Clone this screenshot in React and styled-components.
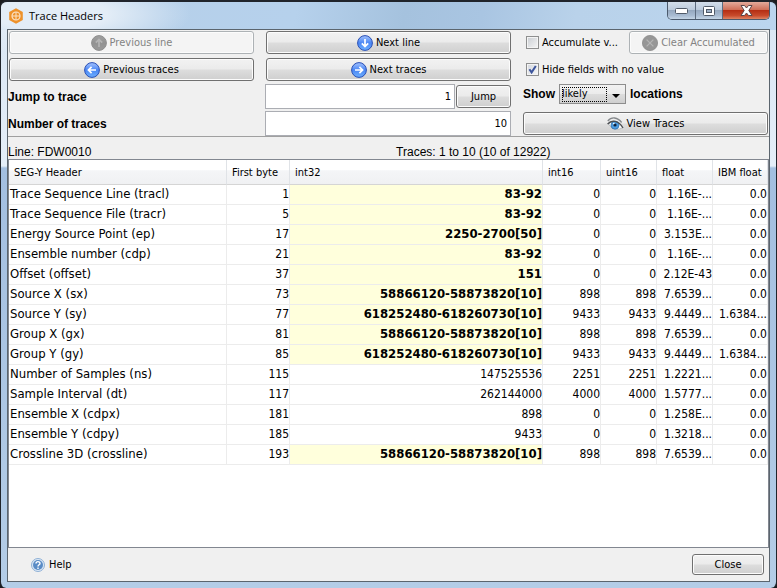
import React, { useState } from 'react';
import styled, { createGlobalStyle, css } from 'styled-components';

const GlobalStyle = createGlobalStyle`
  * { box-sizing: border-box; }
  html, body { margin: 0; background: #1b1c1f; }
  body { font: 11px/14px "DejaVu Sans Condensed", "DejaVu Sans", sans-serif; color: #000; }
  button, input, select { font: inherit; color: inherit; margin: 0; }
`;

const uiFont = css`
  font-family: "DejaVu Sans Condensed", "DejaVu Sans", sans-serif;
  font-size: 11px;
  line-height: 14px;
`;

const WindowFrame = styled.div`
  display: flex;
  flex-direction: column;
  min-height: 100vh;
  padding: 0 6px 6px;
  border: 1px solid #20242b;
  border-width: 2px 1px 0 1px;
  border-radius: 7px 7px 6px 6px;
  background:
    radial-gradient(ellipse 140px 40px at 50px 12px, #e3edf7 40%, rgba(227, 237, 247, 0) 100%),
    linear-gradient(100deg, #b6cfe8 0, #b6d1ec 38%, #a5c2de 52%, #a9c5e2 62%, #b9d2ea 74%, #bbd5ee 100%) 0 0 / 100% 28px no-repeat,
    linear-gradient(#d9e6f4 0, #e4eef8 164px, #a3bfe0 166px, #b4cde7 100%);
`;

const TitleBar = styled.header`
  display: flex;
  align-items: center;
  height: 27px;
  padding: 0 0 0 2px;
`;

const Title = styled.h1`
  flex: 1;
  margin: 0 0 0 6px;
  font: 11px/16px "Open Sans", sans-serif;
`;

const Caption = styled.div`
  display: flex;
  align-self: flex-start;
  height: 18px;
  border: 1px solid #4b5a6c;
  border-top: 0;
  border-radius: 0 0 5px 5px;
  overflow: hidden;
`;

const CaptionButton = styled.button`
  display: grid;
  place-items: center;
  width: ${(p) => (p.$danger ? 47 : 27)}px;
  padding: 0;
  border: 0;
  border-left: ${(p) => (p.$first ? '0' : '1px solid #5c6b7e')};
  background: ${(p) =>
    p.$danger
      ? 'linear-gradient(#e3aa9b 0, #cf7059 45%, #b52f14 50%, #c84b2c 80%, #de8463 100%)'
      : 'linear-gradient(#d3deea 0, #bccbdc 45%, #96a9c0 50%, #a9bcd2 80%, #c4d5e6 100%)'};
`;

const Client = styled.main`
  flex: 1;
  display: flex;
  flex-direction: column;
  border: 1px solid #5b656e;
  background: #f0f0f0;
`;

const Controls = styled.section`
  display: grid;
  grid-template-columns: repeat(3, minmax(0, 1fr));
  grid-auto-rows: 25px;
  gap: 2px 11px;
  align-items: center;
  padding-right: 1px;
  border-bottom: 1px solid #a0a0a0;
`;

const PushButton = styled.button`
  ${uiFont}
  display: flex;
  align-items: center;
  justify-content: center;
  gap: 3px;
  width: ${(p) => p.$width || 'calc(100% - 1px)'};
  height: ${(p) => p.$height || 23}px;
  flex: none;
  margin-left: 1px;
  padding: 0 6px;
  border: 1px solid #707070;
  border-radius: 3px;
  box-shadow: inset 0 0 0 1px #fcfcfc;
  background: linear-gradient(#f2f2f2 0, #ebebeb 48%, #dddddd 52%, #cfcfcf 100%);
  white-space: nowrap;
  &:disabled {
    color: #838383;
    border-color: #adb2b5;
    background: #f4f4f4;
  }
`;

const FieldLabel = styled.label`
  font: bold 12px/16px "Liberation Sans", sans-serif;
`;

const JumpGroup = styled.div`
  display: flex;
  align-items: center;
`;

const NumberInput = styled.input`
  ${uiFont}
  flex: 1;
  min-width: 0;
  width: 100%;
  height: 25px;
  padding: 0 3px;
  border: 1px solid #abadb3;
  background: #fff;
  text-align: right;
`;

const OptionRow = styled.div`
  display: flex;
  align-items: center;
  justify-content: space-between;
  gap: 4px;
`;

const CheckLabel = styled.label`
  ${uiFont}
  display: flex;
  align-items: center;
  gap: 3px;
  padding-left: 4px;
  white-space: nowrap;
`;

const CheckBox = styled.input`
  appearance: none;
  width: 13px;
  height: 13px;
  border: 1px solid #8e8f8f;
  box-shadow: inset 0 0 0 1px #f4f4f4;
  background: linear-gradient(135deg, #c9cdd2, #f6f6f6);
  &:checked {
    background:
      url("data:image/svg+xml,%3Csvg xmlns='http://www.w3.org/2000/svg' viewBox='0 0 11 11'%3E%3Cpath d='M2.4 5.2 4.6 8.4 8.8 2' fill='none' stroke='%233d559c' stroke-width='2'/%3E%3C/svg%3E") center / 11px 11px no-repeat,
      linear-gradient(135deg, #d4d8df, #f6f6f6);
  }
`;

const LocationRow = styled.div`
  display: flex;
  align-items: center;
  align-self: start;
  gap: 4px;
  padding-left: 1px;
`;

const LocationSelect = styled.select`
  ${uiFont}
  appearance: none;
  width: 67px;
  height: 20px;
  padding: 0 20px 0 2px;
  border: 1px solid #8d8d8d;
  background:
    url("data:image/svg+xml,%3Csvg xmlns='http://www.w3.org/2000/svg' viewBox='0 0 8 4'%3E%3Cpath d='M0 0h8L4 4z'/%3E%3C/svg%3E") right 5px top 9px / 8px 4px no-repeat,
    url("data:image/svg+xml,%3Csvg xmlns='http://www.w3.org/2000/svg' viewBox='0 0 45 15'%3E%3Cpath d='M0 .5H45M0 14.5H45M.5 0V15M44.5 0V15' fill='none' stroke='%23000' stroke-dasharray='1 1'/%3E%3C/svg%3E") 2px 2px / 45px 15px no-repeat,
    linear-gradient(#f2f2f2 0, #ebebeb 48%, #dddddd 52%, #cfcfcf 100%);
`;

const StatusLine = styled.div`
  display: grid;
  grid-template-columns: 51fr 49fr;
  height: 22px;
  padding-top: 7px;
  font: 12px/16px "Liberation Sans", sans-serif;
`;

const TablePanel = styled.section`
  flex: 1;
  border: 1px solid #828790;
  background: #fff;
`;

const HeaderTable = styled.table`
  width: 100%;
  table-layout: fixed;
  border-collapse: separate;
  border-spacing: 0;
`;

const Col = styled.col`
  width: ${(p) => p.$width};
`;

const HeadCell = styled.th`
  ${uiFont}
  height: 25px;
  padding: 2px 4px 0 5px;
  border-right: 1px solid #e0e3e7;
  border-bottom: 1px solid #d5d5d5;
  background: linear-gradient(#fff 0, #fff 40%, #f4f5f7 45%, #f0f1f3 100%);
  font-weight: 400;
  text-align: left;
  white-space: nowrap;
`;

const Cell = styled.td`
  height: 20px;
  padding: 0 0 0 1px;
  border-right: 1px solid #ececec;
  border-bottom: 1px solid #ececec;
  font-size: ${(p) => (p.$name || p.$marked ? 13 : 12)}px;
  line-height: 18px;
  vertical-align: baseline;
  overflow: hidden;
  text-overflow: clip;
  white-space: nowrap;
  text-align: ${(p) => (p.$name ? 'left' : 'right')};
  ${(p) => p.$marked && css`background: #ffffdc; font-weight: 700;`}
`;

const Footer = styled.footer`
  display: flex;
  align-items: center;
  justify-content: space-between;
  height: 33px;
  padding: 0 5px 0 23px;
`;

const HelpLink = styled.a`
  ${uiFont}
  display: flex;
  align-items: center;
  gap: 4px;
  color: inherit;
  text-decoration: none;
`;

const arrowTurn = { up: 0, right: 90, down: 180, left: 270 };

function ArrowIcon({ dir, muted }) {
  const id = `ball-${dir}`;
  return (
    <svg width="16" height="16" viewBox="0 0 16 16" aria-hidden="true">
      <defs>
        <linearGradient id={id} x1="0" y1="0" x2="0" y2="1">
          <stop offset="0" stopColor={muted ? '#a0a0a0' : '#a4c3ff'} />
          <stop offset="0.5" stopColor={muted ? '#929292' : '#4a86f4'} />
          <stop offset="1" stopColor={muted ? '#9a9a9a' : '#6db0ff'} />
        </linearGradient>
      </defs>
      <circle cx="8" cy="8" r="7.4" fill={`url(#${id})`} stroke={muted ? '#8e8e8e' : '#2a4fb4'} />
      <path d="M8 12V4.6M4.8 7.6 8 4.4l3.2 3.2" transform={`rotate(${arrowTurn[dir]} 8 8)`} fill="none" stroke={muted ? '#b4b4b4' : '#fff'} strokeWidth="1.7" />
    </svg>
  );
}

function ClearIcon() {
  return (
    <svg width="16" height="16" viewBox="0 0 16 16" aria-hidden="true">
      <circle cx="8" cy="8" r="7.6" fill="#969696" stroke="#8c8c8c" strokeWidth=".8" />
      <path d="m4.6 4.6 6.8 6.8m0-6.8-6.8 6.8" stroke="#b4b4b4" strokeWidth="1.3" />
    </svg>
  );
}

function EyeIcon() {
  return (
    <svg width="17" height="16" viewBox="0 0 17 16" aria-hidden="true">
      <path d="M1.5 8C5 4.3 11 4.5 15.8 11.5 11 14.7 5 13.7 1.5 8z" fill="#f5f7f8" stroke="#a5a9ad" strokeWidth=".7" />
      <circle cx="8" cy="9.2" r="4" fill="#4b9be0" stroke="#2d6ca8" strokeWidth=".7" />
      <circle cx="8" cy="9" r="1.6" fill="#10233a" />
      <circle cx="6.8" cy="7.6" r=".8" fill="#fff" />
      <path d="M.6 8C4.5 3.7 11.5 4 16 12" fill="none" stroke="#4a4d50" strokeWidth="1.3" />
      <path d="M.8 5C4.5 .5 10.5 1 14.6 6.5" fill="none" stroke="#85888b" strokeWidth="1.3" />
    </svg>
  );
}

function LogoIcon() {
  return (
    <svg width="14" height="16" viewBox="0 0 14 16" aria-hidden="true">
      <path d="M7 .2 13.8 4v8L7 15.8.2 12V4z" fill="#ee922b" />
      <circle cx="7" cy="8" r="4" fill="none" stroke="#fbe3c8" strokeWidth="1.2" />
      <path d="M7 4v8M3 8h8" stroke="#fbe3c8" strokeWidth="1" />
    </svg>
  );
}

function HelpIcon() {
  return (
    <svg width="14" height="14" viewBox="0 0 14 14" aria-hidden="true">
      <circle cx="7" cy="7" r="6.5" fill="#dce8f5" stroke="#8fb0d6" />
      <circle cx="7" cy="7" r="5" fill="#5a8cc6" />
      <path d="M5 5.6c0-2.6 4-2.5 4-.2C9 6.8 7 6.8 7 8.5M7 9.5v1.5" fill="none" stroke="#fff" strokeWidth="1.4" />
    </svg>
  );
}

function MinimizeIcon() {
  return (
    <svg width="13" height="6" viewBox="0 0 13 6" aria-hidden="true">
      <rect x=".5" y=".5" width="12" height="5" rx="1" fill="#fff" stroke="#505a68" />
    </svg>
  );
}

function MaximizeIcon() {
  return (
    <svg width="12" height="10" viewBox="0 0 12 10" aria-hidden="true">
      <rect x=".5" y=".5" width="11" height="9" rx="1" fill="#fff" stroke="#505a68" />
      <rect x="3.5" y="3.5" width="5" height="3" fill="#9fb1c7" stroke="#505a68" />
    </svg>
  );
}

function CloseIcon() {
  return (
    <svg width="13" height="11" viewBox="0 0 13 11" aria-hidden="true">
      <path d="M1 .5h3.5l2 2.5 2-2.5H12L8.8 5.5l3.2 5H8.500l-2-2.500-2 2.500H1l3.200-5z" fill="#fff" stroke="#5a4648" />
    </svg>
  );
}

const columns = [
  ['SEG-Y Header', '218px'],
  ['First byte', '63px'],
  ['int32', 'auto'],
  ['int16', '58px'],
  ['uint16', '56px'],
  ['float', '56px'],
  ['IBM float', '55px'],
];

const rows = [
  ['Trace Sequence Line (tracl)', '1', '83-92', '0', '0', '1.16E-...', '0.0', true],
  ['Trace Sequence File (tracr)', '5', '83-92', '0', '0', '1.16E-...', '0.0', true],
  ['Energy Source Point (ep)', '17', '2250-2700[50]', '0', '0', '3.153E...', '0.0', true],
  ['Ensemble number (cdp)', '21', '83-92', '0', '0', '1.16E-...', '0.0', true],
  ['Offset (offset)', '37', '151', '0', '0', '2.12E-43', '0.0', true],
  ['Source X (sx)', '73', '58866120-58873820[10]', '898', '898', '7.6539...', '0.0', true],
  ['Source Y (sy)', '77', '618252480-618260730[10]', '9433', '9433', '9.4449...', '1.6384...', true],
  ['Group X (gx)', '81', '58866120-58873820[10]', '898', '898', '7.6539...', '0.0', true],
  ['Group Y (gy)', '85', '618252480-618260730[10]', '9433', '9433', '9.4449...', '1.6384...', true],
  ['Number of Samples (ns)', '115', '147525536', '2251', '2251', '1.2221...', '0.0', false],
  ['Sample Interval (dt)', '117', '262144000', '4000', '4000', '1.5777...', '0.0', false],
  ['Ensemble X (cdpx)', '181', '898', '0', '0', '1.258E...', '0.0', false],
  ['Ensemble Y (cdpy)', '185', '9433', '0', '0', '1.3218...', '0.0', false],
  ['Crossline 3D (crossline)', '193', '58866120-58873820[10]', '898', '898', '7.6539...', '0.0', true],
];

export default function App() {
  const [accumulate, setAccumulate] = useState(false);
  const [hideEmpty, setHideEmpty] = useState(true);

  return (
    <>
      <GlobalStyle />
      <WindowFrame>
        <TitleBar>
          <LogoIcon />
          <Title>Trace Headers</Title>
          <Caption>
            <CaptionButton $first aria-label="Minimize"><MinimizeIcon /></CaptionButton>
            <CaptionButton aria-label="Maximize"><MaximizeIcon /></CaptionButton>
            <CaptionButton $danger aria-label="Close window"><CloseIcon /></CaptionButton>
          </Caption>
        </TitleBar>
        <Client>
          <Controls>
            <PushButton disabled><ArrowIcon dir="up" muted />Previous line</PushButton>
            <PushButton><ArrowIcon dir="down" />Next line</PushButton>
            <OptionRow>
              <CheckLabel>
                <CheckBox type="checkbox" checked={accumulate} onChange={(e) => setAccumulate(e.target.checked)} />
                Accumulate v...
              </CheckLabel>
              <PushButton disabled $width="139px"><ClearIcon />Clear Accumulated</PushButton>
            </OptionRow>

            <PushButton><ArrowIcon dir="left" />Previous traces</PushButton>
            <PushButton><ArrowIcon dir="right" />Next traces</PushButton>
            <CheckLabel>
              <CheckBox type="checkbox" checked={hideEmpty} onChange={(e) => setHideEmpty(e.target.checked)} />
              Hide fields with no value
            </CheckLabel>

            <FieldLabel htmlFor="jump">Jump to trace</FieldLabel>
            <JumpGroup>
              <NumberInput id="jump" defaultValue="1" />
              <PushButton $width="55px">Jump</PushButton>
            </JumpGroup>
            <LocationRow>
              <FieldLabel htmlFor="locations">Show</FieldLabel>
              <LocationSelect id="locations"><option>likely</option></LocationSelect>
              <FieldLabel as="span">locations</FieldLabel>
            </LocationRow>

            <FieldLabel htmlFor="count">Number of traces</FieldLabel>
            <NumberInput id="count" defaultValue="10" />
            <PushButton><EyeIcon />View Traces</PushButton>
          </Controls>
          <StatusLine>
            <span>Line: FDW0010</span>
            <span>Traces: 1 to 10 (10 of 12922)</span>
          </StatusLine>
          <TablePanel>
            <HeaderTable>
              <colgroup>
                {columns.map(([name, width]) => <Col key={name} $width={width} />)}
              </colgroup>
              <thead>
                <tr>{columns.map(([name]) => <HeadCell key={name}>{name}</HeadCell>)}</tr>
              </thead>
              <tbody>
                {rows.map(([name, first, int32, int16, uint16, float, ibm, marked]) => (
                  <tr key={name}>
                    <Cell $name>{name}</Cell>
                    <Cell>{first}</Cell>
                    <Cell $marked={marked}>{int32}</Cell>
                    <Cell>{int16}</Cell>
                    <Cell>{uint16}</Cell>
                    <Cell>{float}</Cell>
                    <Cell>{ibm}</Cell>
                  </tr>
                ))}
              </tbody>
            </HeaderTable>
          </TablePanel>
          <Footer>
            <HelpLink href="#help"><HelpIcon />Help</HelpLink>
            <PushButton $width="72px" $height="21">Close</PushButton>
          </Footer>
        </Client>
      </WindowFrame>
    </>
  );
}
